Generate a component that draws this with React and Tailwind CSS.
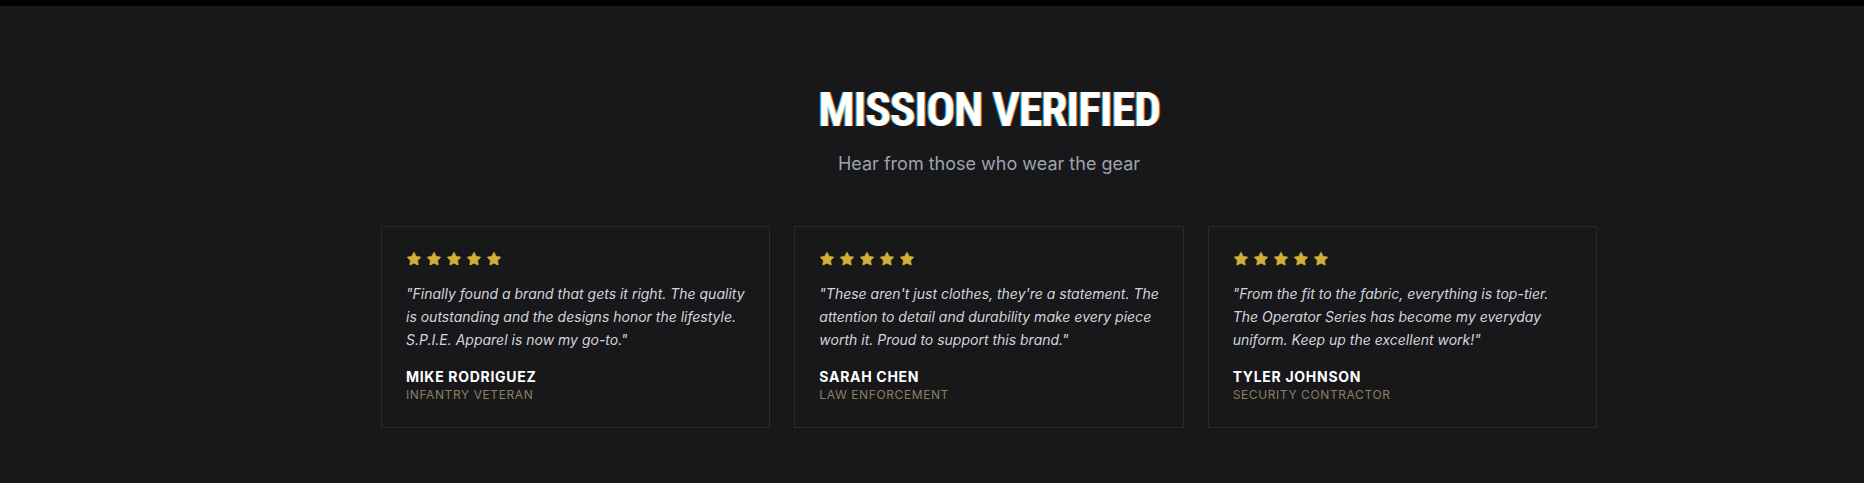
import React from "react";
import { Star } from "lucide-react";

const reviews = [
  {
    quote:
      '"Finally found a brand that gets it right. The quality is outstanding and the designs honor the lifestyle. S.P.I.E. Apparel is now my go-to."',
    name: "Mike Rodriguez",
    role: "Infantry Veteran",
  },
  {
    quote:
      '"These aren\'t just clothes, they\'re a statement. The attention to detail and durability make every piece worth it. Proud to support this brand."',
    name: "Sarah Chen",
    role: "Law Enforcement",
  },
  {
    quote:
      '"From the fit to the fabric, everything is top-tier. The Operator Series has become my everyday uniform. Keep up the excellent work!"',
    name: "Tyler Johnson",
    role: "Security Contractor",
  },
];

export default function App() {
  return (
    <div className="h-[483px] overflow-hidden bg-[#18181b] font-['Inter',sans-serif]">
      <div className="h-[6px] bg-black" />
      <section className="pl-[114px] pt-[80px] pb-[54px]">
        <div className="mx-auto w-[1216px]">
          <div className="mb-12 flex flex-col items-center">
            <h2 className="mb-4 font-['Roboto_Condensed','Roboto',sans-serif] text-[48px] font-bold leading-none tracking-tight text-white [font-stretch:condensed] [text-shadow:-1px_0_rgba(0,200,255,0.8),1px_0_rgba(255,120,0,0.8)]">
              MISSION VERIFIED
            </h2>
            <p className="text-lg leading-7 text-[#9ca3af]">Hear from those who wear the gear</p>
          </div>
          <div className="grid grid-cols-3 gap-6">
            {reviews.map((r) => (
              <div key={r.name} className="border border-[#2a2a2e] bg-[#18181b] p-6">
                <div className="mb-4 flex gap-1 text-[#d4af37]">
                  {[0, 1, 2, 3, 4].map((i) => (
                    <Star key={i} className="h-4 w-4" fill="currentColor" strokeWidth={1} />
                  ))}
                </div>
                <p className="mb-4 mr-[-4px] text-sm italic leading-relaxed text-[#d1d5db]">{r.quote}</p>
                <div className="text-sm font-bold uppercase leading-5 tracking-wider text-white">{r.name}</div>
                <div className="text-xs uppercase leading-4 tracking-wider text-[#8c7f62]">{r.role}</div>
              </div>
            ))}
          </div>
        </div>
      </section>
    </div>
  );
}
